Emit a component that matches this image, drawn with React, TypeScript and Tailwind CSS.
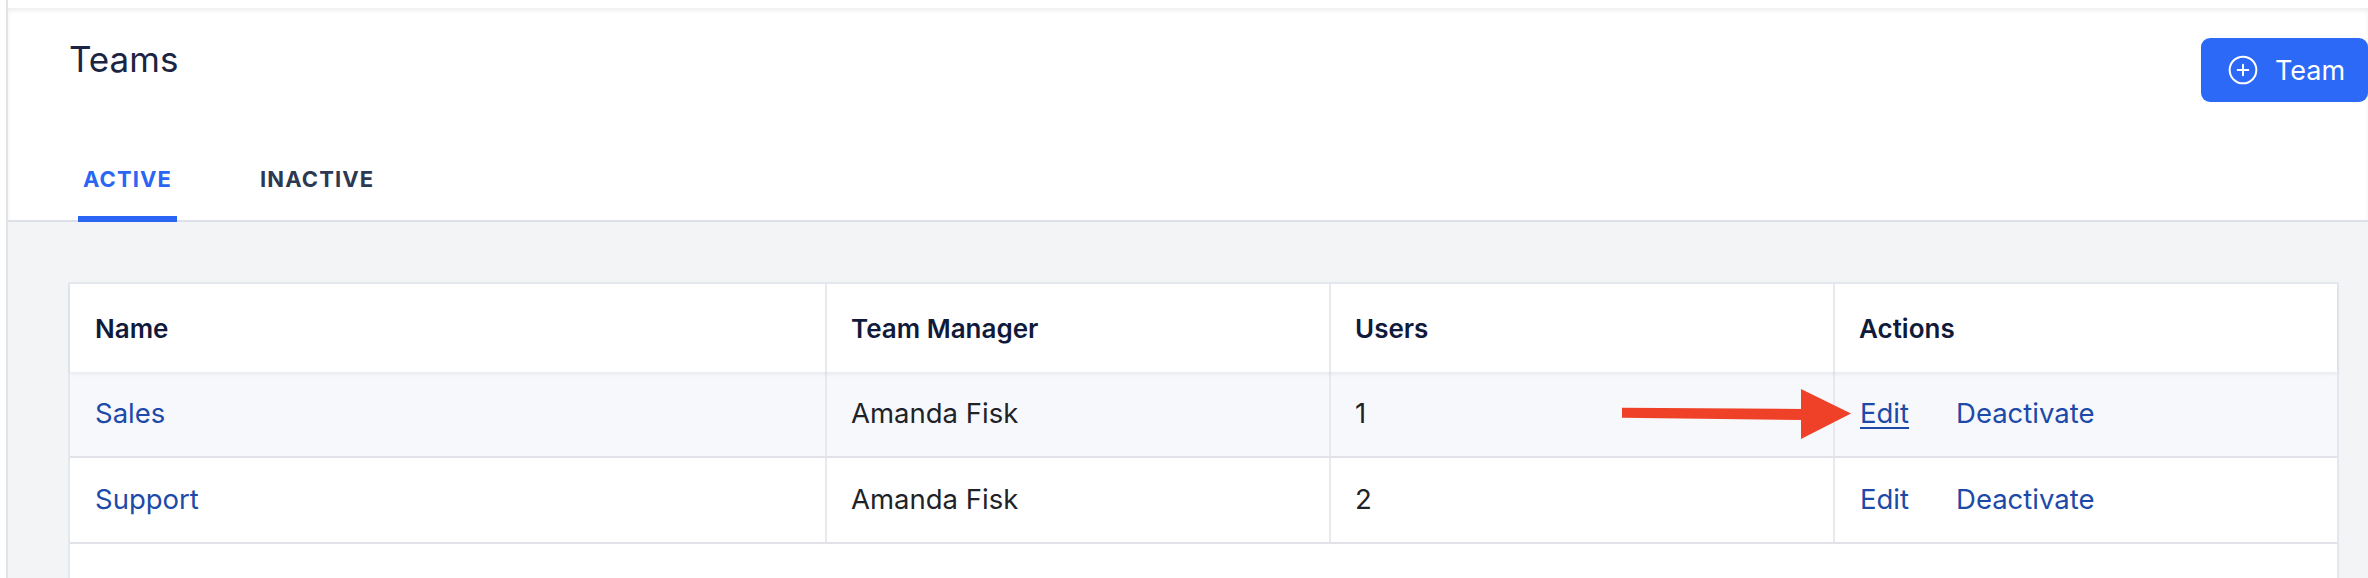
import React from "react";
import { CirclePlus } from "lucide-react";

type Team = { name: string; manager: string; users: number };

const teams: Team[] = [
  { name: "Sales", manager: "Amanda Fisk", users: 1 },
  { name: "Support", manager: "Amanda Fisk", users: 2 },
];

const cols = "grid grid-cols-[755px_504px_504px_504px]";

export default function App() {
  return (
    <div className="relative flex h-[578px] w-[2368px] overflow-hidden bg-white font-['Inter',sans-serif]">
      <div className="w-[6px] shrink-0" />
      <main className="flex min-w-0 flex-1 flex-col border-l-2 border-[#e3e4ea]">
        <div className="h-[8px] shrink-0 bg-white" />
        <header className="shrink-0 border-b-2 border-[#dde0e8] bg-white pl-[61px] shadow-[inset_0_3px_5px_-1px_rgba(17,24,39,0.09)]">
          <div className="flex items-start justify-between pt-[30px]">
            <h1 className="mt-[4px] text-[35px] leading-none font-normal text-[#1b2543]">Teams</h1>
            <button
              type="button"
              className="flex h-[64px] w-[167px] items-center gap-[16px] rounded-[9px] bg-[#2c69f6] pl-[26px] text-[27px] leading-none text-white">
              <CirclePlus size={32} strokeWidth={1.5} />
              <span>Team</span>
            </button>
          </div>
          <nav className="-mb-[2px] ml-[9px] mt-[66px] flex gap-[78px]">
            <button
              type="button"
              className="border-b-[6px] border-[#2a66f3] px-[5px] pb-[26px] text-[22px] leading-none font-bold tracking-[0.05em] text-[#2a66f3]">
              ACTIVE
            </button>
            <button
              type="button"
              className="border-b-[6px] border-transparent px-[5px] pb-[26px] text-[22px] leading-none font-bold tracking-[0.05em] text-[#2d3851]">
              INACTIVE
            </button>
          </nav>
        </header>

        <section className="min-h-0 flex-1 overflow-hidden bg-[#f3f4f6] pl-[60px] pr-[29px] pt-[60px]">
          <div className="h-full border-x-2 border-t-2 border-[#e5e7ef] bg-white">
            <div
              className={`${cols} relative z-10 h-[88px] items-center bg-white text-[26px] font-semibold text-[#101a3b] shadow-[0_2px_4px_rgba(15,23,42,0.07)]`}>
              <div className="pl-[25px]">Name</div>
              <div className="flex h-full items-center border-l-2 border-[#e8e9ef] pl-[24px]">Team Manager</div>
              <div className="flex h-full items-center border-l-2 border-[#e8e9ef] pl-[24px]">Users</div>
              <div className="flex h-full items-center border-l-2 border-[#e8e9ef] pl-[24px]">Actions</div>
            </div>

            {teams.map((t, i) => (
              <div
                key={t.name}
                className={`${cols} h-[86px] border-b-2 border-[#e1e3e8] text-[27.5px] leading-none text-[#1f2328] ${
                  i === 0 ? "bg-[#f7f8fc]" : "bg-white"
                }`}>
                <div className="flex items-center pl-[25px]">
                  <a className="text-[#1d4aa8]">{t.name}</a>
                </div>
                <div className="flex items-center border-l-2 border-[#e8e9ef] pl-[24px]">{t.manager}</div>
                <div className="flex items-center border-l-2 border-[#e8e9ef] pl-[24px]">{t.users}</div>
                <div className="flex items-center gap-[47px] border-l-2 border-[#e8e9ef] pl-[25px] text-[#1d4aa8]">
                  <a className={i === 0 ? "underline decoration-2 underline-offset-[4px]" : ""}>Edit</a>
                  <a>Deactivate</a>
                </div>
              </div>
            ))}
          </div>
        </section>
      </main>

      <svg
        className="absolute left-[1620px] top-[386px] h-[56px] w-[234px]"
        viewBox="0 0 234 56"
        fill="#ee4127">
        <polygon points="2,21.7 183,23 183,34 2,31.7" />
        <polygon points="181,3 231,27.5 181,53" />
      </svg>
    </div>
  );
}
